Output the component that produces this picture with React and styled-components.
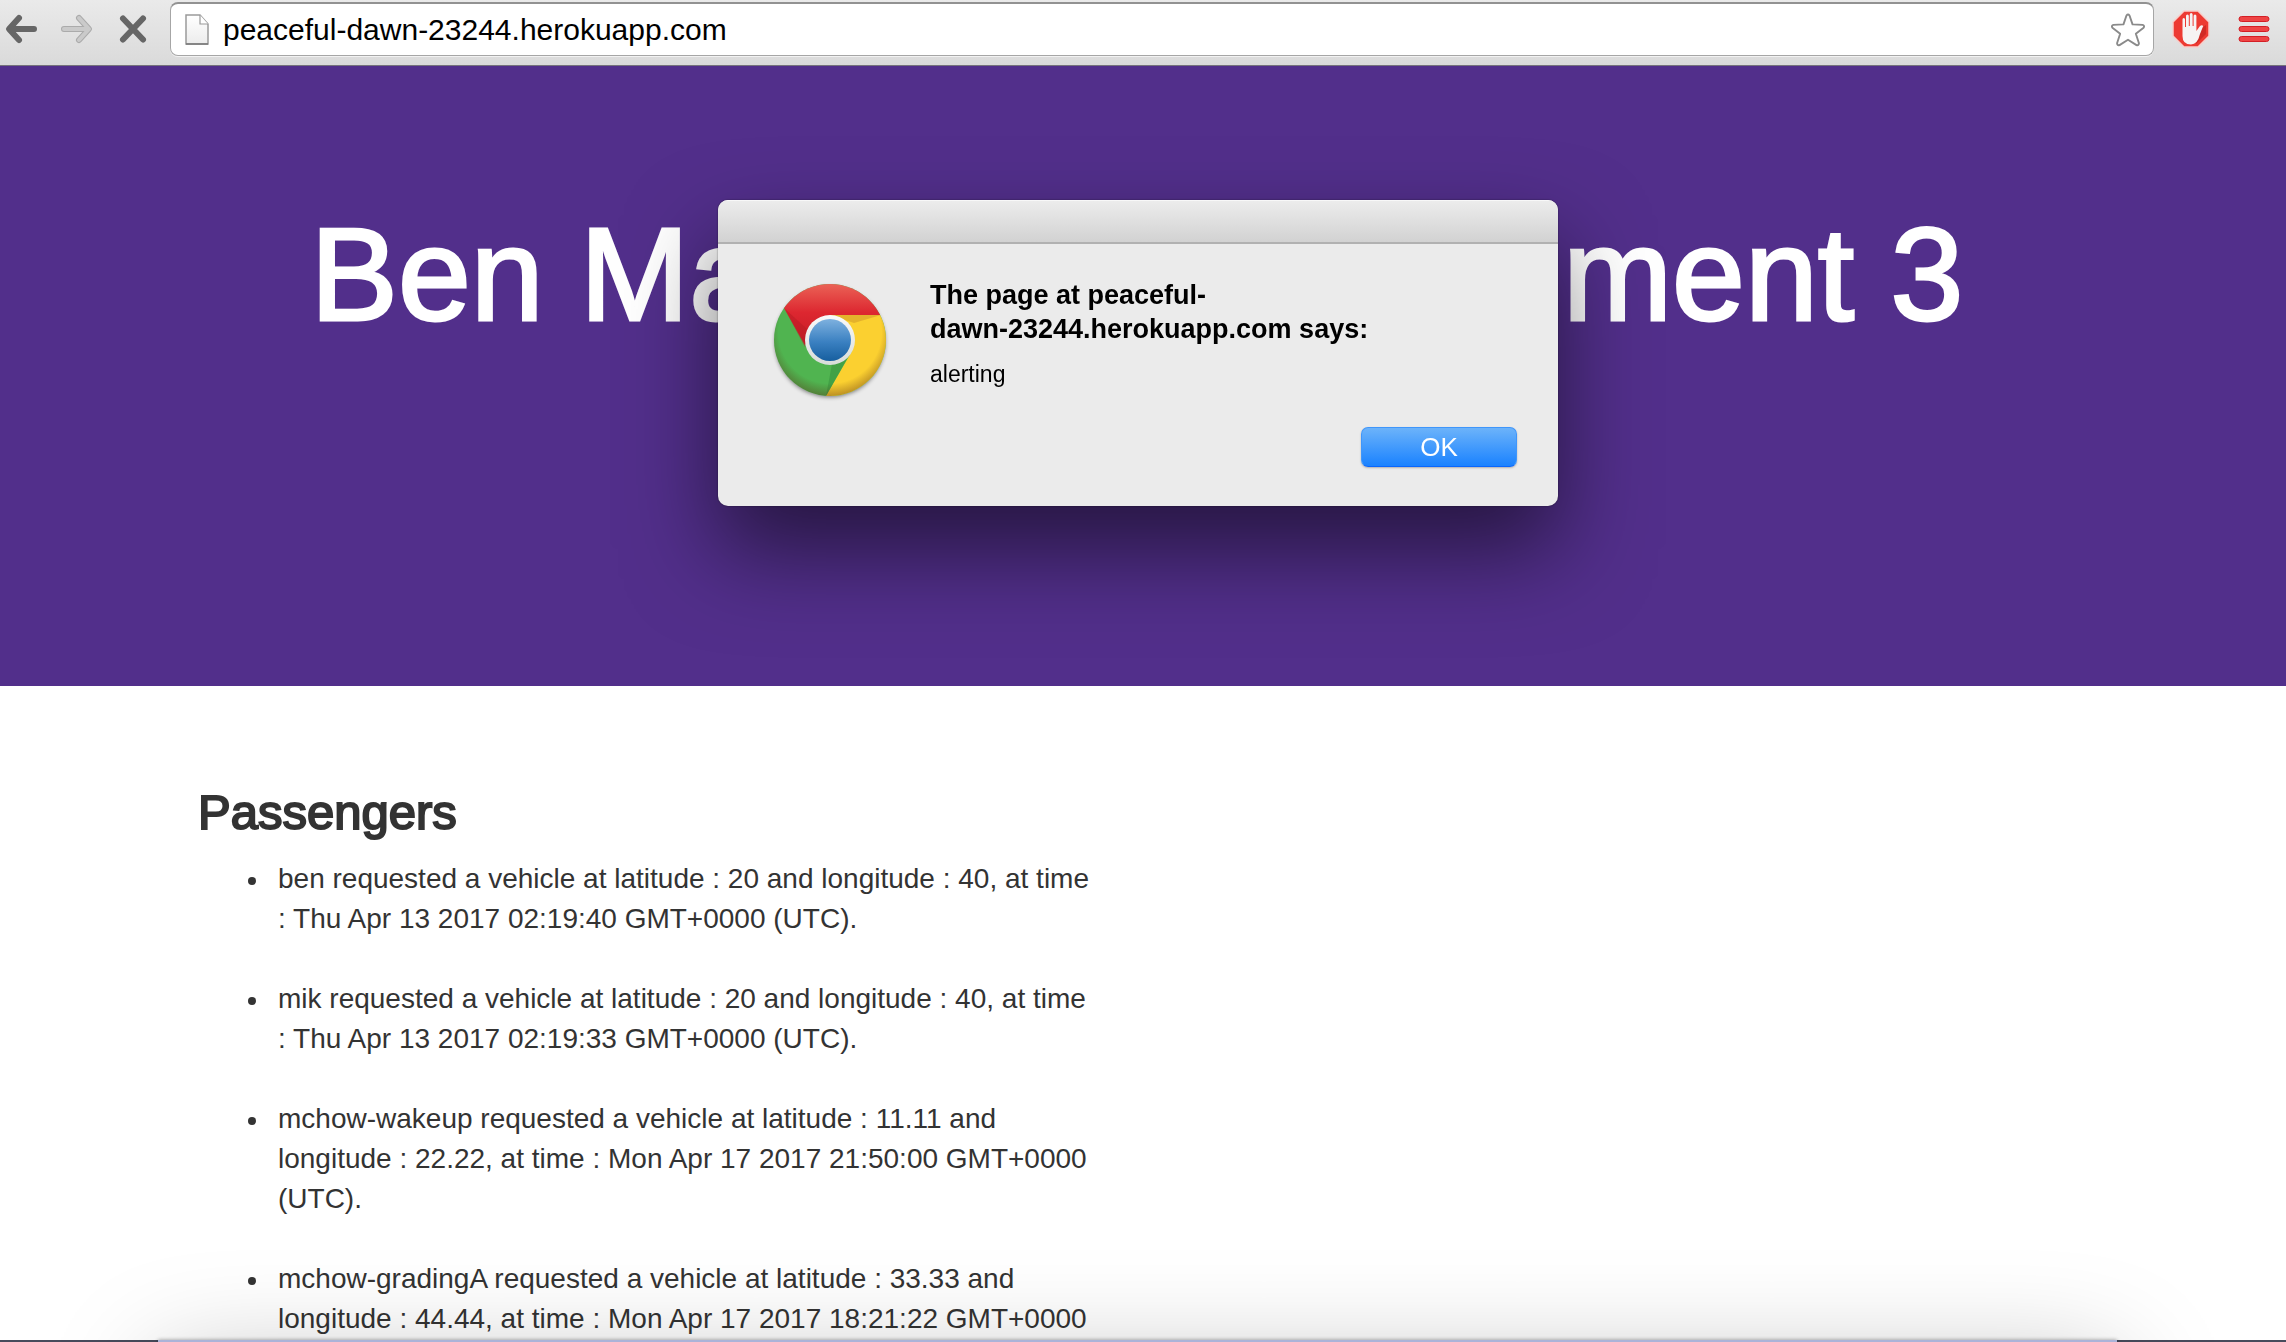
import React from "react";
import styled, { createGlobalStyle } from "styled-components";

const GlobalStyle = createGlobalStyle`
  *, *::before, *::after { box-sizing: border-box; }
  html, body { margin: 0; height: 100%; overflow: hidden; background: #fff; }
  body { font-family: "Liberation Sans", Arial, sans-serif; color: #333; }
`;

const Window = styled.div`
  height: 100vh;
  overflow: hidden;
  display: flex;
  flex-direction: column;
`;

const Toolbar = styled.header`
  flex: none;
  display: flex;
  align-items: flex-start;
  height: 66px;
  padding: 2px 14px 0 3px;
  background: linear-gradient(#eaeaea, #dadada);
  border-bottom: 1px solid #76737c;
`;

const NavButtons = styled.nav`
  display: flex;
  gap: 20px;
  margin-right: 19px;
`;

const IconButton = styled.button`
  display: flex;
  align-items: center;
  justify-content: center;
  flex: none;
  width: ${(p) => p.$width || 36}px;
  height: 54px;
  padding: 0;
  border: 0;
  background: none;
`;

const AddressBar = styled.label`
  flex: 1;
  display: flex;
  align-items: center;
  height: 54px;
  padding: 0 4px 0 14px;
  background: #fff;
  border: 1px solid #a6a6a6;
  border-top: 2px solid #929292;
  border-radius: 8px;
  box-shadow: 0 1px 0 #f2f2f2;
`;

const AddressInput = styled.input`
  flex: 1;
  height: 48px;
  margin-left: 14px;
  padding: 0;
  border: 0;
  outline: 0;
  background: none;
  color: #000;
  font: 30px "Liberation Sans", Arial, sans-serif;
`;

const Extensions = styled.div`
  display: flex;
  gap: 24px;
  margin-left: 16px;
`;

const Hero = styled.section`
  flex: none;
  height: 620px;
  padding: 138px 12px 0 0;
  background: #522f8b;
  color: #fff;
  text-align: center;
`;

const HeroTitle = styled.h1`
  margin: 0;
  font-size: 131px;
  line-height: 142px;
  font-weight: 400;
  -webkit-text-stroke: 3px currentColor;
  white-space: nowrap;
`;

const Container = styled.main`
  width: 100%;
  max-width: 1890px;
  margin: 0 auto;
  padding-top: 100px;
`;

const Column = styled.section`
  width: 898px;
`;

const SectionTitle = styled.h2`
  margin: 0 0 20px;
  font-size: 49px;
  line-height: 53px;
  font-weight: 400;
  -webkit-text-stroke: 2px currentColor;
`;

const RequestList = styled.ul`
  margin: 0;
  padding-left: 80px;
  font-size: 28px;
  line-height: 40px;
  list-style: none;
`;

const Request = styled.li`
  margin-bottom: 40px;

  &::before {
    content: "";
    display: inline-block;
    width: 8px;
    height: 8px;
    margin: 0 22px 0 -30px;
    border-radius: 50%;
    background: #333;
    vertical-align: middle;
  }
`;

const Overlay = styled.div`
  position: fixed;
  inset: 0;
  display: flex;
  align-items: flex-start;
  justify-content: center;
  padding: 200px 10px 0 0;
`;

const Dialog = styled.div`
  width: 840px;
  border-radius: 10px;
  background: #ebebeb;
  overflow: hidden;
  box-shadow: 0 0 2px rgba(0, 0, 0, 0.5), 0 44px 90px rgba(0, 0, 0, 0.54);
`;

const DialogBar = styled.div`
  height: 44px;
  background: linear-gradient(#ececec, #d2d2d2);
  border-top: 1px solid #f8f8f8;
  border-bottom: 2px solid #b1b1b1;
`;

const DialogBody = styled.div`
  display: grid;
  grid-template-columns: 120px 1fr;
  column-gap: 40px;
  padding: 34px 41px 39px 52px;
`;

const DialogText = styled.div`
  color: #000;
`;

const DialogTitle = styled.h3`
  margin: 0 0 14px;
  font-size: 27px;
  line-height: 34px;
  font-weight: 700;
`;

const DialogMessage = styled.p`
  margin: 0;
  font-size: 23px;
  line-height: 28px;
`;

const DialogActions = styled.div`
  grid-column: 1 / -1;
  display: flex;
  justify-content: flex-end;
`;

const OkButton = styled.button`
  width: 156px;
  height: 40px;
  margin-top: 25px;
  padding: 0;
  border: 1px solid #3f96fb;
  border-bottom-color: #0a66fb;
  border-radius: 7px;
  background: linear-gradient(#6cb3fa, #1a82ff);
  box-shadow: 0 1px 2px rgba(0, 0, 0, 0.25);
  color: #fff;
  font: 26px/36px "Liberation Sans", Arial, sans-serif;
`;

const Desktop = styled.div`
  position: fixed;
  left: 0;
  right: 0;
  bottom: 0;
  height: 2px;
  padding: 0 169px 0 158px;
  background: #474b5c;
`;

const Dock = styled.div`
  height: 200px;
  background: #abb3d8;
  box-shadow: 0 0 4px rgba(0, 0, 0, 0.4), 0 24px 110px rgba(0, 0, 0, 0.26);
`;

const BackIcon = () => (
  <svg width="34" height="32" viewBox="0 0 34 32" fill="none" stroke="#666" strokeWidth="6" strokeLinecap="round" strokeLinejoin="round">
    <path d="M15 5 L5 16 L15 27 M6 16 H30" />
  </svg>
);

const ForwardIcon = () => (
  <svg width="34" height="32" viewBox="0 0 34 32" fill="none" strokeLinecap="round" strokeLinejoin="round">
    <path stroke="#ababab" strokeWidth="6" d="M19 5 L29 16 L19 27 M28 16 H4" />
    <path stroke="#cacaca" strokeWidth="4" d="M19 5 L29 16 L19 27 M28 16 H4" />
  </svg>
);

const StopIcon = () => (
  <svg width="30" height="32" viewBox="0 0 30 32" fill="none" stroke="#666" strokeWidth="6" strokeLinecap="round">
    <path d="M5 5.500 L25 26.500 M25 5.500 L5 26.500" />
  </svg>
);

const PageIcon = () => (
  <svg width="24" height="32" viewBox="0 0 24 32">
    <defs>
      <linearGradient id="paper" x2="0" y2="1">
        <stop stopColor="#fff" />
        <stop offset="1" stopColor="#ececec" />
      </linearGradient>
    </defs>
    <path d="M1 1 H15 L23 10 V30 H1 Z" fill="url(#paper)" stroke="#9a9a9a" strokeWidth="1.500" />
    <path d="M15 1 V10 H23" fill="#fff" stroke="#9a9a9a" strokeWidth="1.200" />
    <path d="M1 30 H23" stroke="#777" strokeWidth="1.500" />
  </svg>
);

const StarIcon = () => (
  <svg width="36" height="34" viewBox="0 0 38 36" fill="#fff" stroke="#8a8a8a" strokeWidth="2" strokeLinejoin="round">
    <path d="M17.400 2.600 Q19 0.500 20.600 2.600 L23.800 12 L34.500 12.600 Q37 13.500 35.500 15.500 L27.300 22 L30.600 32 Q30.300 34.800 28 34 L19 28.300 L10 34 Q7.700 34.800 7.400 32 L10.700 22 L2.500 15.500 Q1 13.500 3.500 12.600 L14.200 12 Z" />
  </svg>
);

const AdBlockIcon = () => (
  <svg width="38" height="38" viewBox="0 0 38 38">
    <path d="M12 1 H26 L37 12 V26 L26 37 H12 L1 26 V12 Z" fill="#ed3a32" stroke="#f7cfcb" strokeWidth="1.500" />
    <path d="M24 34 L34 24 V15 L24 22 Z" fill="#c4231f" opacity="0.7" />
    <path
      d="M10.500 21 V9.500 Q10.500 8 11.800 8 Q13 8 13 9.500 V17 H14 V6 Q14 4.500 15.400 4.500 Q16.800 4.500 16.800 6 V16 H17.800 V4.500 Q17.800 3 19.200 3 Q20.600 3 20.600 4.500 V16 H21.600 V6 Q21.600 4.500 23 4.500 Q24.400 4.500 24.400 6 V21 L28 16 Q30 14.500 31.200 16 Q30 19 28 24 Q25.500 34.500 19 34.500 Q10.500 34.500 10.500 26 Z"
      fill="#f6f3f3"
    />
  </svg>
);

const MenuIcon = () => (
  <svg width="32" height="28" viewBox="0 0 32 28" fill="#ee4444" stroke="#d41f26" strokeWidth="1">
    <rect x="1" y="1.500" width="30" height="5" rx="2.500" />
    <rect x="1" y="11.500" width="30" height="5" rx="2.500" />
    <rect x="1" y="21.500" width="30" height="5" rx="2.500" />
  </svg>
);

const ChromeIcon = () => (
  <svg width="120" height="124" viewBox="-60 -62 120 124" role="img" aria-label="Chrome">
    <defs>
      <linearGradient id="chromeRed" x1="0" y1="0" x2="0" y2="1">
        <stop stopColor="#ec6a5b" />
        <stop offset="0.5" stopColor="#dd2730" />
        <stop offset="1" stopColor="#c51a25" />
      </linearGradient>
      <linearGradient id="chromeBlue" x2="0" y2="1">
        <stop stopColor="#7eb1df" />
        <stop offset="0.550" stopColor="#3a80c1" />
        <stop offset="1" stopColor="#175f9f" />
      </linearGradient>
      <linearGradient id="chromeRing" x2="0" y2="1">
        <stop stopColor="#fafafa" />
        <stop offset="1" stopColor="#d8dcd9" />
      </linearGradient>
      <radialGradient id="chromeEdge" gradientUnits="userSpaceOnUse" cx="0" cy="-8" r="66">
        <stop offset="0.780" stopColor="#5a2a10" stopOpacity="0" />
        <stop offset="1" stopColor="#5a2a10" stopOpacity="0.450" />
      </radialGradient>
      <filter id="chromeShadow" x="-20%" y="-20%" width="140%" height="140%">
        <feGaussianBlur stdDeviation="2" />
      </filter>
      <clipPath id="chromeDisc">
        <circle r="56" />
      </clipPath>
    </defs>
    <circle cy="2" r="55" fill="#000" opacity="0.5" filter="url(#chromeShadow)" />
    <g clipPath="url(#chromeDisc)">
      <rect x="-60" y="-60" width="120" height="120" fill="#50b450" />
      <path d="M-46 -32 L-60 -60 H60 V-25 H0 L-25 5 Z" fill="url(#chromeRed)" />
      <path d="M0 -25 H60 V60 H-6 L-4 56 L22 11 Z" fill="#fbd030" />
      <path d="M0 -25 H51 L24 -17 Z" fill="#dfaa2c" opacity="0.8" />
      <path d="M-46 -32 L-22 -10 L-25 7 Z" fill="#b71c24" opacity="0.5" />
      <path d="M-4 56 L2 24 L18 17 Z" fill="#389540" opacity="0.6" />
      <circle r="56" fill="url(#chromeEdge)" />
    </g>
    <circle r="25" fill="url(#chromeRing)" />
    <circle r="21" fill="url(#chromeBlue)" />
  </svg>
);

const requests = [
  { name: "ben", lat: "20", lng: "40", time: "Thu Apr 13 2017 02:19:40" },
  { name: "mik", lat: "20", lng: "40", time: "Thu Apr 13 2017 02:19:33" },
  { name: "mchow-wakeup", lat: "11.11", lng: "22.22", time: "Mon Apr 17 2017 21:50:00" },
  { name: "mchow-gradingA", lat: "33.33", lng: "44.44", time: "Mon Apr 17 2017 18:21:22" },
];

export default function App() {
  return (
    <Window>
      <GlobalStyle />
      <Toolbar>
        <NavButtons>
          <IconButton aria-label="Back"><BackIcon /></IconButton>
          <IconButton aria-label="Forward"><ForwardIcon /></IconButton>
          <IconButton aria-label="Stop loading"><StopIcon /></IconButton>
        </NavButtons>
        <AddressBar>
          <PageIcon />
          <AddressInput aria-label="Address" type="text" defaultValue="peaceful-dawn-23244.herokuapp.com" />
          <IconButton aria-label="Bookmark this page" $width={42}><StarIcon /></IconButton>
        </AddressBar>
        <Extensions>
          <IconButton aria-label="Ad blocker" $width={42}><AdBlockIcon /></IconButton>
          <IconButton aria-label="Menu" $width={36}><MenuIcon /></IconButton>
        </Extensions>
      </Toolbar>
      <Hero>
        <HeroTitle>Ben Matthews Assignment 3</HeroTitle>
      </Hero>
      <Container>
        <Column>
          <SectionTitle>Passengers</SectionTitle>
          <RequestList>
            {requests.map((r) => (
              <Request key={r.name}>
                {`${r.name} requested a vehicle at latitude : ${r.lat} and longitude : ${r.lng}, at time : ${r.time} GMT+0000 (UTC).`}
              </Request>
            ))}
          </RequestList>
        </Column>
      </Container>
      <Desktop>
        <Dock />
      </Desktop>
      <Overlay>
        <Dialog role="alertdialog" aria-labelledby="alert-title" aria-describedby="alert-message">
          <DialogBar />
          <DialogBody>
            <ChromeIcon />
            <DialogText>
              <DialogTitle id="alert-title">
                The page at peaceful-
                <br />
                dawn-23244.herokuapp.com says:
              </DialogTitle>
              <DialogMessage id="alert-message">alerting</DialogMessage>
            </DialogText>
            <DialogActions>
              <OkButton>OK</OkButton>
            </DialogActions>
          </DialogBody>
        </Dialog>
      </Overlay>
    </Window>
  );
}
